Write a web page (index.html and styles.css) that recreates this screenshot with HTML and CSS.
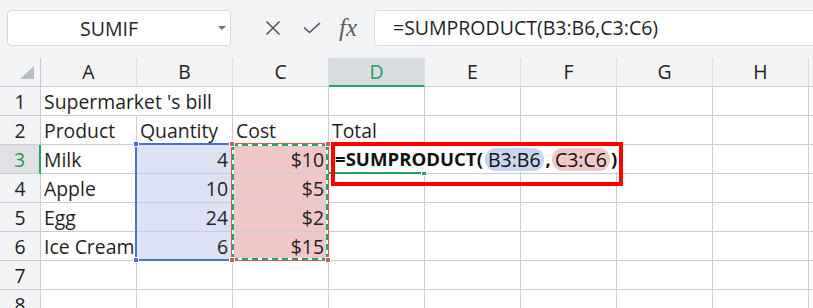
FILE: index.html
```html
<!DOCTYPE html>
<html>
<head>
<meta charset="utf-8">
<link rel="stylesheet" href="styles.css">
</head>
<body>
<div class="toolbar">
  <div class="namebox"><span class="namebox-text">SUMIF</span><i class="caret"></i></div>
  <div class="fx-icons">
    <svg class="ic-x" width="16" height="16" viewBox="0 0 16 16"><path d="M1.5 1.5 L14.5 14.5 M14.5 1.5 L1.5 14.5" stroke="#4d525a" stroke-width="1.5" fill="none"/></svg>
    <svg class="ic-check" width="18" height="12" viewBox="0 0 18 12"><path d="M1 5.5 L6.5 10.5 L17 1" stroke="#4d525a" stroke-width="1.6" fill="none"/></svg>
    <span class="fx">fx</span>
  </div>
  <div class="formula">=SUMPRODUCT(B3:B6,C3:C6)</div>
</div>
<div class="sheet">
  <div class="cell colhead corner"><svg width="41" height="28" viewBox="0 0 41 28"><polygon points="34,8 34,21 20,21" fill="#b9bdc5"/></svg></div>
  <div class="cell colhead">A</div>
  <div class="cell colhead">B</div>
  <div class="cell colhead">C</div>
  <div class="cell colhead active">D</div>
  <div class="cell colhead">E</div>
  <div class="cell colhead">F</div>
  <div class="cell colhead">G</div>
  <div class="cell colhead">H</div>
  <div class="cell colhead"></div>

  <div class="cell rowhead">1</div>
  <div class="cell no-right">Supermarket 's bill</div>
  <div class="cell"></div><div class="cell"></div><div class="cell"></div><div class="cell"></div><div class="cell"></div><div class="cell"></div><div class="cell"></div><div class="cell"></div>

  <div class="cell rowhead">2</div>
  <div class="cell">Product</div>
  <div class="cell">Quantity</div>
  <div class="cell">Cost</div>
  <div class="cell">Total</div>
  <div class="cell"></div><div class="cell"></div><div class="cell"></div><div class="cell"></div><div class="cell"></div>

  <div class="cell rowhead active">3</div>
  <div class="cell">Milk</div>
  <div class="cell num sel-b">4</div>
  <div class="cell num sel-c">$10</div>
  <div class="cell"></div><div class="cell"></div><div class="cell"></div><div class="cell"></div><div class="cell"></div><div class="cell"></div>

  <div class="cell rowhead">4</div>
  <div class="cell">Apple</div>
  <div class="cell num sel-b">10</div>
  <div class="cell num sel-c">$5</div>
  <div class="cell"></div><div class="cell"></div><div class="cell"></div><div class="cell"></div><div class="cell"></div><div class="cell"></div>

  <div class="cell rowhead">5</div>
  <div class="cell">Egg</div>
  <div class="cell num sel-b">24</div>
  <div class="cell num sel-c">$2</div>
  <div class="cell"></div><div class="cell"></div><div class="cell"></div><div class="cell"></div><div class="cell"></div><div class="cell"></div>

  <div class="cell rowhead">6</div>
  <div class="cell">Ice Cream</div>
  <div class="cell num sel-b">6</div>
  <div class="cell num sel-c">$15</div>
  <div class="cell"></div><div class="cell"></div><div class="cell"></div><div class="cell"></div><div class="cell"></div><div class="cell"></div>

  <div class="cell rowhead">7</div>
  <div class="cell"></div><div class="cell"></div><div class="cell"></div><div class="cell"></div><div class="cell"></div><div class="cell"></div><div class="cell"></div><div class="cell"></div><div class="cell"></div>

  <div class="cell rowhead">8</div>
  <div class="cell"></div><div class="cell"></div><div class="cell"></div><div class="cell"></div><div class="cell"></div><div class="cell"></div><div class="cell"></div><div class="cell"></div><div class="cell"></div>

  <div class="range-b"></div>
  <div class="range-c"><div class="ants"></div></div>
  <i class="handle blue h-b1"></i>
  <i class="handle blue h-b2"></i>
  <i class="handle red h-c1"></i>
  <i class="handle red h-c2"></i>
  <i class="handle red h-c3"></i>
  <i class="handle red h-c4"></i>
  <div class="active-line"></div>
  <i class="handle green h-d"></i>
  <div class="callout">
    <div class="editor">
      <span class="fn">=SUMPRODUCT(</span><span class="pill pill-b">B3:B6</span><span class="fn comma">,</span><span class="pill pill-c">C3:C6</span><span class="fn close">)</span>
    </div>
  </div>
</div>
</body>
</html>
```

FILE: styles.css
```css
* { box-sizing: border-box; }
html, body { margin: 0; padding: 0; }
body {
  width: 813px;
  height: 308px;
  overflow: hidden;
  background: #f3f4f6;
  font-family: "Open Sans", "Noto Sans", sans-serif;
  color: #1f1f1f;
}

.toolbar {
  height: 58px;
  display: flex;
  align-items: flex-start;
  padding: 10px 0 0 7px;
  width: 1200px;
}
.namebox {
  width: 224px;
  height: 36px;
  background: #fff;
  border: 1px solid #d6d9df;
  border-radius: 4px;
  display: flex;
  align-items: center;
}
.namebox-text {
  flex: 1;
  text-align: center;
  padding-right: 8px;
  font-size: 19.5px;
  color: #262626;
}
.caret {
  width: 0;
  height: 0;
  border-left: 4px solid transparent;
  border-right: 4px solid transparent;
  border-top: 4px solid #6b6f76;
  margin-right: 4px;
}
.fx-icons {
  width: 143px;
  height: 36px;
  display: flex;
  align-items: center;
  padding-left: 34px;
}
.ic-check { margin-left: 22px; }
.fx {
  margin-left: 18px;
  font-family: "Liberation Serif", serif;
  font-style: italic;
  font-size: 25px;
  color: #5a5e66;
  line-height: 36px;
}
.formula {
  width: 500px;
  height: 36px;
  background: #fff;
  border: 1px solid #d6d9df;
  border-radius: 4px;
  padding-left: 18px;
  font-size: 19.5px;
  line-height: 34px;
  color: #1f1f1f;
}

.sheet {
  position: relative;
  display: grid;
  grid-template-columns: 41px repeat(9, 96px);
  grid-auto-rows: 29px;
  width: 905px;
  background: #fff;
}
.cell {
  border-right: 1px solid #c6ccda;
  border-bottom: 1px solid #c6ccda;
  padding: 2px 4px 0 3px;
  line-height: 26px;
  font-size: 19.4px;
  white-space: nowrap;
}
.no-right { border-right-color: transparent; }
.num { text-align: right; }
.sel-b { background: #dce2f4; }
.sel-c { background: #edc8c7; }

.colhead {
  background: #f3f4f6;
  text-align: center;
  padding: 0;
  line-height: 28px;
  border-right-color: #d9dde5;
  border-bottom-color: #c6ccda;
  color: #222;
}
.colhead.corner { border-right-color: #c6ccda; }
.colhead.corner svg { display: block; }
.colhead.active {
  background: #d9dce1;
  color: #1f9d5c;
  border-bottom: 2px solid #21a366;
}
.rowhead {
  background: #f3f4f6;
  text-align: center;
  padding: 2px 0 0 0;
  color: #222;
}
.rowhead.active {
  background: #dfe1e5;
  color: #1f9d5c;
  border-right: 2px solid #21a366;
}

.range-b {
  position: absolute;
  left: 135px;
  top: 85px;
  width: 98px;
  height: 118px;
  border: 2px solid #4a72cc;
}
.range-c {
  position: absolute;
  left: 231px;
  top: 85px;
  width: 98px;
  height: 118px;
  border: 1px solid #cf5b5b;
}
.ants {
  position: absolute;
  inset: 0;
  border: 2px solid #fff;
}
.ants::after {
  content: "";
  position: absolute;
  inset: -2px;
  border: 2px dashed #22a565;
}
.handle {
  position: absolute;
  width: 6px;
  height: 6px;
  border: 1px solid #fff;
}
.handle.blue { background: #4a72cc; }
.handle.red { background: #cf5b5b; }
.handle.green { background: #21a366; }
.h-b1 { left: 133px; top: 83px; }
.h-b2 { left: 133px; top: 199px; }
.h-c1 { left: 229px; top: 83px; }
.h-c2 { left: 325px; top: 83px; }
.h-c3 { left: 229px; top: 199px; }
.h-c4 { left: 325px; top: 199px; }
.h-d { left: 421px; top: 112px; }

.active-line {
  position: absolute;
  left: 328px;
  top: 114px;
  width: 96px;
  height: 2px;
  background: #21a366;
}

.callout {
  position: absolute;
  left: 331px;
  top: 84px;
  width: 292px;
  height: 44px;
  border: 4px solid #ff0000;
}
.editor {
  height: 26px;
  background: #fff;
  display: flex;
  align-items: center;
  padding-left: 0;
  font-size: 19.5px;
  color: #111;
}
.fn {
  font-weight: 700;
  line-height: 26px;
  font-size: 18.6px;
}
.comma { margin: 0 1px 0 2px; }
.close { margin-left: 1px; }
.pill {
  height: 23px;
  line-height: 23px;
  padding: 0 3px;
  border-radius: 11px;
  margin-left: 2px;
}
.pill-b { background: #c8d4f0; }
.pill-c { background: #f1c8c8; margin-left: 0; }
```
